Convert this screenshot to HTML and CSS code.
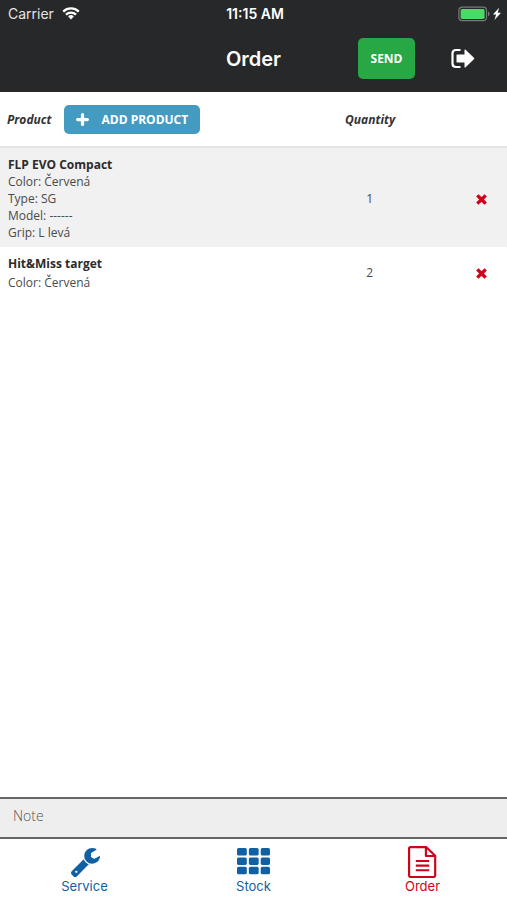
FILE: index.html
```html
<!DOCTYPE html>
<html lang="en">
<head>
<meta charset="utf-8">
<meta name="viewport" content="width=device-width, initial-scale=1">
<title>Order</title>
<link rel="stylesheet" href="styles.css">
</head>
<body>
<header class="top">
  <div class="status">
    <div class="carrier">
      <span>Carrier</span>
      <svg class="wifi" viewBox="0 0 18 13" aria-hidden="true">
        <path d="M1.2 4.6a11.2 11.2 0 0 1 15.6 0M4 7.6a7.2 7.2 0 0 1 10 0" fill="none" stroke="#fff" stroke-width="2.3"/>
        <path d="M9 12.4 6.1 9.5a4.1 4.1 0 0 1 5.8 0z" fill="#fff"/>
      </svg>
    </div>
    <span class="time">11:15 AM</span>
    <svg class="battery" viewBox="0 0 44 16" aria-hidden="true">
      <rect x=".9" y="1.2" width="27.6" height="13.4" rx="3.4" fill="none" stroke="#77797a" stroke-width="1.2"/>
      <rect x="2.6" y="2.9" width="24" height="10" rx="1.6" fill="#4cd964"/>
      <path d="M30 5.6q1.6.5 1.6 2.3T30 10.2z" fill="#77797a"/>
      <path d="m41.2 1.8-6.3 6.8h3.2L36.500 14l6.500-7.200h-3.300z" fill="#fff"/>
    </svg>
  </div>
  <div class="bar">
    <h1 class="title">Order</h1>
    <div class="actions">
      <button class="send" type="button">SEND</button>
      <button class="icon-button" type="button" aria-label="Log out">
        <svg class="logout" viewBox="0 0 24 22" aria-hidden="true">
          <path d="M10 2H5.500Q2 2 2 5.500v10Q2 19 5.500 19H10" fill="none" stroke="#fff" stroke-width="2.200"/>
          <path d="M6.800 6.500H14V2.300q0-1.400 1.100-.5l8.300 7.900q.8.800 0 1.600l-8.300 7.900q-1.100.9-1.100-.5v-4.200H6.800q-.8 0-.8-.8V7.300q0-.8.800-.8z" fill="#fff"/>
        </svg>
      </button>
    </div>
  </div>
</header>

<main class="content">
  <table class="products">
    <thead>
      <tr>
        <th class="col-product" scope="col">
          <div class="product-head">
            <span>Product</span>
            <button class="add" type="button">
              <svg class="plus" viewBox="0 0 12 12" aria-hidden="true"><path d="M6 1.500v9M1.500 6h9" stroke="#fff" stroke-width="3" stroke-linecap="round"/></svg>
              ADD PRODUCT
            </button>
          </div>
        </th>
        <th class="col-quantity" scope="col">Quantity</th>
        <td class="col-remove"></td>
      </tr>
    </thead>
    <tbody>
      <tr>
        <td>
          <strong class="name">FLP EVO Compact</strong>
          <div>Color: Červená</div>
          <div>Type: SG</div>
          <div>Model: ------</div>
          <div>Grip: L levá</div>
        </td>
        <td class="quantity">1</td>
        <td class="remove">
          <button class="icon-button" type="button" aria-label="Remove FLP EVO Compact">
            <svg class="cross" viewBox="0 0 12 12" aria-hidden="true"><path d="m2.700 2.700 6.600 6.600M9.300 2.700 2.700 9.300" stroke="#d0021b" stroke-width="3.600" stroke-linecap="square"/></svg>
          </button>
        </td>
      </tr>
      <tr>
        <td>
          <strong class="name">Hit&amp;Miss target</strong>
          <div>Color: Červená</div>
        </td>
        <td class="quantity">2</td>
        <td class="remove">
          <button class="icon-button" type="button" aria-label="Remove Hit&amp;Miss target">
            <svg class="cross" viewBox="0 0 12 12" aria-hidden="true"><path d="m2.700 2.700 6.600 6.600M9.300 2.700 2.700 9.300" stroke="#d0021b" stroke-width="3.600" stroke-linecap="square"/></svg>
          </button>
        </td>
      </tr>
    </tbody>
  </table>
</main>

<textarea class="note" rows="1" placeholder="Note" aria-label="Note"></textarea>

<nav class="tabs">
  <a class="tab" href="#service">
    <svg class="tab-icon" viewBox="-85 -42 1867 1867" aria-hidden="true">
      <path d="M448 1472q0-26-19-45t-45-19-45 19-19 45 19 45 45 19 45-19 19-45zm644-420l-682 682q-37 37-90 37-52 0-91-37l-106-108q-38-36-38-90 0-53 38-91l681-681q39 98 114.500 173.500t173.500 114.500zm634-435q0 39-23 106-47 134-164.500 217.500t-258.500 83.500q-185 0-316.500-131.500t-131.500-316.500 131.500-316.500 316.500-131.500q58 0 121.500 16.500t107.500 46.500q16 11 16 28t-16 28l-293 169v224l193 107q5-3 79-48.500t135.500-81 70.500-35.500q15 0 23.500 10t8.500 25z" fill="currentColor"/>
    </svg>
    Service
  </a>
  <a class="tab" href="#stock">
    <svg class="tab-icon" viewBox="0 0 32 32" aria-hidden="true">
      <g fill="currentColor">
        <rect x="0" y="3" width="9.500" height="7.300" rx="1.500"/><rect x="11.500" y="3" width="9.500" height="7.300" rx="1.500"/><rect x="23" y="3" width="9" height="7.300" rx="1.500"/>
        <rect x="0" y="12" width="9.500" height="7.300" rx="1.500"/><rect x="11.500" y="12" width="9.500" height="7.300" rx="1.500"/><rect x="23" y="12" width="9" height="7.300" rx="1.500"/>
        <rect x="0" y="21" width="9.500" height="7.300" rx="1.500"/><rect x="11.500" y="21" width="9.500" height="7.300" rx="1.500"/><rect x="23" y="21" width="9" height="7.300" rx="1.500"/>
      </g>
    </svg>
    Stock
  </a>
  <a class="tab tab-active" href="#order" aria-current="page">
    <svg class="tab-icon" viewBox="0 0 32 32" aria-hidden="true">
      <path d="M4.500 2h15l8.800 8.500v19q0 1.500-1.500 1.500H4.500Q3 31 3 29.500v-26Q3 2 4.500 2zM19.300 2.300v8.400h8.800M9.500 15.500h13M9.500 20h13M9.500 24.500h13" fill="none" stroke="currentColor" stroke-width="2.100" stroke-linejoin="round"/>
    </svg>
    Order
  </a>
</nav>
</body>
</html>
```
FILE: styles.css
```css
* {
  box-sizing: border-box;
}

body {
  display: flex;
  flex-direction: column;
  min-height: 100vh;
  margin: 0;
  background: #fff;
  color: #4a4a4a;
  font-family: "Open Sans", sans-serif;
  font-size: 12px;
}

button {
  padding: 0;
  border: 0;
  background: none;
  color: #fff;
  font-family: inherit;
  font-size: 12px;
  font-weight: 700;
  cursor: pointer;
}

svg {
  display: block;
}

.top {
  padding-bottom: 2px;
  background: #262829;
  color: #fff;
  font-family: Inter, sans-serif;
}

.status {
  display: grid;
  grid-template-columns: 1fr auto 1fr;
  align-items: center;
  height: 27px;
  padding: 0 5px 0 8px;
  font-size: 14px;
}

.carrier {
  display: flex;
  align-items: center;
  gap: 8px;
  color: #e4e4e5;
}

.wifi {
  width: 18px;
  height: 13px;
}

.time {
  font-size: 14px;
  font-weight: 600;
}

.battery {
  width: 44px;
  height: 16px;
  justify-self: end;
}

.bar {
  display: grid;
  grid-template-columns: 1fr auto 1fr;
  align-items: center;
  height: 63px;
  padding-right: 32px;
  padding-left: 32px;
}

.title {
  grid-column: 2;
  margin: 0;
  font-size: 20px;
  font-weight: 600;
}

.actions {
  display: flex;
  align-items: center;
  justify-content: flex-end;
  gap: 35px;
}

.send {
  width: 57px;
  height: 41px;
  border-radius: 5px;
  background: #28a745;
  font-family: "Open Sans", sans-serif;
}

.logout {
  width: 25px;
  height: 22px;
}

.content {
  flex: 1;
}

.products {
  width: 100%;
  border-collapse: collapse;
  table-layout: fixed;
  line-height: 17px;
}

.products thead tr {
  height: 55px;
  border-bottom: 2px solid #e2e3e3;
  color: #333;
  font-style: italic;
}

.products th {
  padding: 0;
}

.col-product {
  width: 56%;
}

.col-quantity {
  width: 34%;
}

.col-remove {
  width: 10%;
}

.product-head {
  display: flex;
  align-items: center;
  gap: 13px;
  padding-left: 7px;
}

.add {
  display: flex;
  align-items: center;
  gap: 12px;
  height: 29px;
  padding: 0 12px;
  border-radius: 5px;
  background: #439bc2;
}

.plus {
  width: 13px;
  height: 13px;
}

.products tbody td {
  padding: 8px 0 6px 8px;
}

.products tbody tr:nth-child(odd) {
  background: #f1f1f1;
}

.products tbody tr:nth-child(even) .name {
  margin-bottom: 2px;
}

.name {
  display: block;
  color: #2b2b2b;
}

.products tbody .quantity,
.products tbody .remove {
  padding: 1px 1px 0 0;
  text-align: center;
}

.cross {
  width: 11px;
  height: 11px;
}

.icon-button {
  display: inline-block;
  vertical-align: middle;
}

.note {
  display: block;
  width: 100%;
  height: 42px;
  padding: 7px 13px;
  border: solid #666;
  border-width: 2px 0;
  border-radius: 0;
  background: #eee;
  font-family: inherit;
  font-size: 14px;
  font-weight: 300;
  line-height: 19px;
  resize: none;
}

.note::placeholder {
  color: #555;
}

.tabs {
  display: grid;
  grid-template-columns: repeat(3, 1fr);
  height: 61px;
}

.tab {
  display: flex;
  flex-direction: column;
  align-items: center;
  padding-top: 6px;
  color: #1260a4;
  font-family: Inter, sans-serif;
  font-size: 13px;
  line-height: 16px;
  text-decoration: none;
}

.tab-active {
  color: #d0021b;
}

.tab-icon {
  width: 33px;
  height: 33px;
}
```
